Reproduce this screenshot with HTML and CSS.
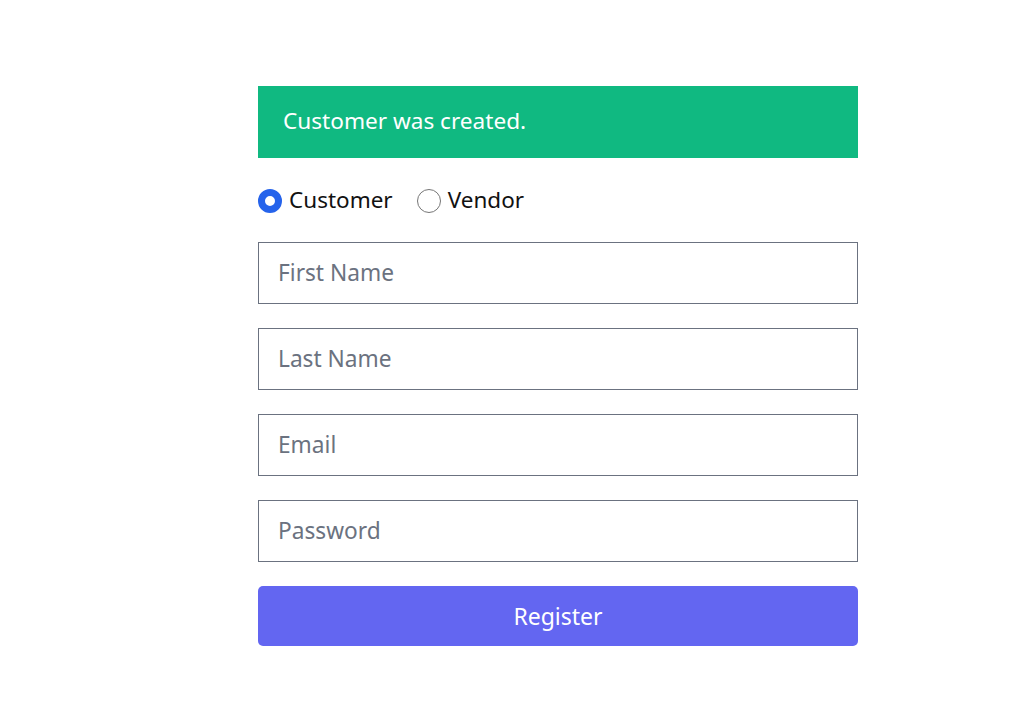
FILE: index.html
```html
<!DOCTYPE html>
<html>
<head>
<meta charset="utf-8">
<link rel="stylesheet" href="styles.css">
</head>
<body>
<main class="form-wrap">
  <div class="alert">Customer was created.</div>
  <div class="radio-row">
    <label class="radio"><input type="radio" name="type" checked><span>Customer</span></label>
    <label class="radio"><input type="radio" name="type"><span>Vendor</span></label>
  </div>
  <input class="field" type="text" placeholder="First Name">
  <input class="field" type="text" placeholder="Last Name">
  <input class="field" type="email" placeholder="Email">
  <input class="field" type="password" placeholder="Password">
  <button class="btn" type="button">Register</button>
</main>
</body>
</html>
```
FILE: styles.css
```css
* { box-sizing: border-box; }
body {
  margin: 0;
  background: #fff;
  font-family: "Noto Sans", "Open Sans", sans-serif;
}
.form-wrap {
  width: 600px;
  margin-left: 258px;
  padding-top: 86px;
  display: flex;
  flex-direction: column;
}
.alert {
  height: 72px;
  background: #10b981;
  color: #fff;
  font-size: 22.6px;
  padding-left: 25px;
  padding-bottom: 3px;
  display: flex;
  align-items: center;
}
.radio-row {
  display: flex;
  gap: 24px;
  height: 84px;
  align-items: center;
  padding-top: 2px;
}
.radio {
  display: flex;
  align-items: center;
  gap: 7px;
  font-size: 22.5px;
  color: #111;
}
.radio span {
  position: relative;
  top: -2px;
}
.radio input {
  appearance: none;
  -webkit-appearance: none;
  margin: 0;
  width: 24px;
  height: 24px;
  border-radius: 50%;
  border: 1px solid #767676;
  background: #fff;
}
.radio input:checked {
  border: 7px solid #2563eb;
  background: #fff;
}
.field {
  height: 62px;
  border: 1px solid #6b7280;
  border-radius: 0;
  padding: 0 19px 2px;
  font-family: inherit;
  font-size: 22.7px;
  margin-bottom: 24px;
  color: #111;
  outline: none;
}
.field::placeholder { color: #6b7280; }
.btn {
  height: 60px;
  background: #6366f1;
  color: #fff;
  border: none;
  border-radius: 5px;
  font-family: inherit;
  font-size: 23px;
  padding-bottom: 2px;
}
```
